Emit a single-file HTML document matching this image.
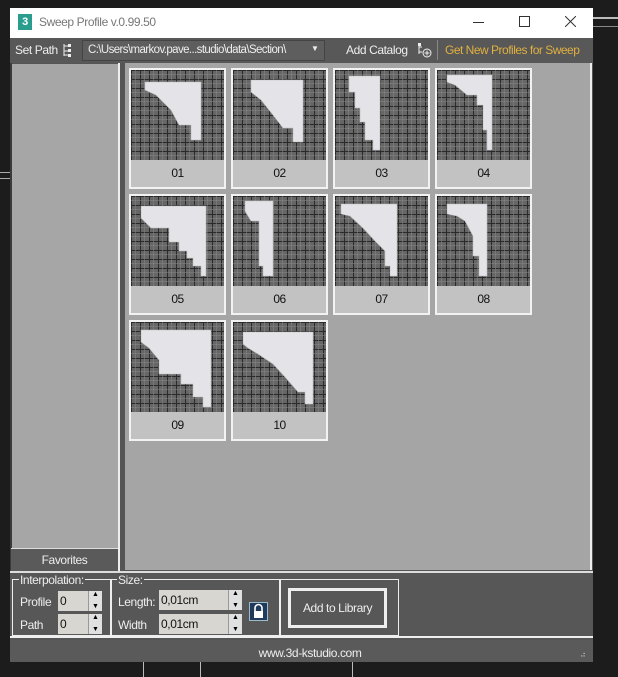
<!DOCTYPE html>
<html><head><meta charset="utf-8"><style>
*{margin:0;padding:0;box-sizing:border-box}
body{width:618px;height:677px;background:#1c1c1c;position:relative;overflow:hidden;font-family:"Liberation Sans",sans-serif;font-size:12px;letter-spacing:-0.4px}
.a{position:absolute;white-space:nowrap}
.thumb{position:absolute;width:97px;height:121px;border:2px solid #f2f2f2;background:#c2c2c2}
.thumb svg{display:block;width:93px;height:90px}
.thumb .l{text-align:center;color:#111;font-size:12px;line-height:27px;letter-spacing:-0.5px}
.inp{position:absolute;background:#d8d6d0;color:#111;height:20px;line-height:20px;padding-left:2px;font-size:12px}
.sp{position:absolute;width:14px;height:20px;background:#e0e0e0;border-left:1px solid #999}
.sp:before{content:"▲";position:absolute;top:0;left:3px;font-size:7px;color:#000}
.sp:after{content:"▼";position:absolute;bottom:1px;left:3px;font-size:7px;color:#000}
.w{color:#eee}
</style></head><body>
<div class="a" style="left:593px;top:17px;width:25px;height:2px;background:#bbb"></div>
<div class="a" style="left:593px;top:26px;width:25px;height:1px;background:#888"></div>
<div class="a" style="left:0;top:172px;width:10px;height:1px;background:#aaa"></div>
<div class="a" style="left:0;top:178px;width:10px;height:1px;background:#aaa"></div>
<div class="a" style="left:143px;top:662px;width:1px;height:15px;background:#bbb"></div>
<div class="a" style="left:200px;top:662px;width:1px;height:15px;background:#bbb"></div>
<div class="a" style="left:352px;top:662px;width:1px;height:15px;background:#bbb"></div>
<div class="a" style="left:10px;top:8px;width:583px;height:654px;background:#555"></div>
<div class="a" style="left:10px;top:8px;width:583px;height:30px;background:#fff"></div>
<div class="a" style="left:18px;top:14px;width:14px;height:16px;background:#2a9d8f;color:#fff;font-size:11px;font-weight:bold;text-align:center;line-height:16px">3</div>
<div class="a" style="left:39px;top:15px;color:#777;font-size:12px">Sweep Profile v.0.99.50</div>
<div class="a" style="left:473px;top:22px;width:11px;height:1px;background:#333"></div>
<div class="a" style="left:519px;top:16px;width:11px;height:11px;border:1px solid #333"></div>
<svg class="a" style="left:565px;top:16px" width="11" height="11"><path d="M0 0L11 11M11 0L0 11" stroke="#333"/></svg>
<div class="a" style="left:10px;top:38px;width:583px;height:25px;background:#585858"></div>
<div class="a w" style="left:15px;top:43px;font-size:12px">Set Path</div>
<svg class="a" style="left:62px;top:43px" width="12" height="14"><path d="M2 1v12M2 3h4M2 8h4M2 12h4" stroke="#eee" fill="none"/><rect x="6" y="1" width="3" height="3" fill="#eee"/><rect x="6" y="6" width="3" height="3" fill="#eee"/><rect x="6" y="11" width="3" height="3" fill="#eee"/></svg>
<div class="a" style="left:82px;top:40px;width:243px;height:21px;background:#5e5e5e;border:1px solid #444"></div>
<div class="a w" style="left:88px;top:44px;font-size:11.5px;letter-spacing:-0.6px">C:\Users\markov.pave...studio\data\Section\</div>
<div class="a w" style="left:311px;top:44px;font-size:8px">▼</div>
<div class="a w" style="left:346px;top:43px;font-size:12px">Add Catalog</div>
<svg class="a" style="left:417px;top:43px" width="16" height="15"><path d="M2 1v10M2 4h3M2 9h3" stroke="#eee" fill="none"/><rect x="1" y="0" width="3" height="3" fill="#eee"/><circle cx="10" cy="10" r="4" stroke="#eee" fill="none"/><path d="M10 7.5v5M7.5 10h5" stroke="#eee"/></svg>
<div class="a" style="left:437px;top:40px;width:1px;height:20px;background:#888"></div>
<div class="a" style="left:445px;top:43px;font-size:12px;letter-spacing:-0.5px;color:#e0b040">Get New Profiles for Sweep</div>
<div class="a" style="left:10px;top:63px;width:2px;height:509px;background:#3a3a3a"></div>
<div class="a" style="left:12px;top:64px;width:106px;height:484px;background:#a6a6a6"></div>
<div class="a" style="left:118px;top:63px;width:2px;height:509px;background:#eee"></div>
<div class="a" style="left:120px;top:63px;width:5px;height:509px;background:#555"></div>
<div class="a" style="left:11px;top:548px;width:107px;height:23px;background:#5a5a5a;border-top:1px solid #ddd"></div>
<div class="a w" style="left:11px;top:553px;width:107px;text-align:center;font-size:12px">Favorites</div>
<div class="a" style="left:125px;top:63px;width:467px;height:507px;background:#a5a5a5;border-right:2px solid #eee"></div>
<div id="g"></div>
<div class="a" style="left:10px;top:571px;width:583px;height:67px;background:#575757;border-top:2px solid #ddd;border-bottom:2px solid #eee"></div>
<div class="a" style="left:12px;top:579px;width:99px;height:57px;border:1px solid #eee"></div>
<div class="a" style="left:111px;top:579px;width:169px;height:57px;border:1px solid #eee"></div>
<div class="a" style="left:280px;top:579px;width:119px;height:57px;border:1px solid #eee"></div>
<div class="a w" style="left:19px;top:573px;background:#575757;padding:0 1px">Interpolation:</div>
<div class="a w" style="left:117px;top:573px;background:#575757;padding:0 1px">Size:</div>
<div class="a w" style="left:20px;top:595px">Profile</div>
<div class="a w" style="left:20px;top:618px">Path</div>
<div class="inp" style="left:58px;top:591px;width:30px">0</div><div class="sp" style="left:88px;top:591px"></div>
<div class="inp" style="left:58px;top:614px;width:30px">0</div><div class="sp" style="left:88px;top:614px"></div>
<div class="a w" style="left:118px;top:595px">Length:</div>
<div class="a w" style="left:118px;top:618px">Width</div>
<div class="inp" style="left:159px;top:590px;width:69px">0,01cm</div><div class="sp" style="left:228px;top:590px"></div>
<div class="inp" style="left:159px;top:614px;width:69px">0,01cm</div><div class="sp" style="left:228px;top:614px"></div>
<div class="a" style="left:249px;top:602px;width:19px;height:19px;background:#1f3a5a;border:1px solid #9bc"></div>
<svg class="a" style="left:252px;top:603px" width="13" height="17"><path d="M3 8V5a3.5 3.5 0 0 1 7 0v3" stroke="#fff" stroke-width="1.6" fill="none"/><rect x="2" y="8" width="9" height="7" fill="#fff"/></svg>
<div class="a" style="left:288px;top:588px;width:99px;height:40px;border:3px solid #eee"></div>
<div class="a w" style="left:288px;top:601px;width:99px;text-align:center">Add to Library</div>
<div class="a" style="left:10px;top:640px;width:583px;height:22px;background:#5a5a5a"></div>
<div class="a w" style="left:10px;top:646px;width:600px;text-align:center;font-size:12px">www.3d-kstudio.com</div>
<div class="a" style="left:580px;top:650px;color:#ccc;font-size:8px">⠴</div>
<script>
var shapes=[
"M14 12H70V70H60V55H48L40 40 25 25 14 20Z",
"M18 10H70V72H60V58H50L40 45 28 30 18 22Z",
"M14 6H45V80H38V70H30V52H25V38H20V22H14Z",
"M10 5H55V80H50V60H46V35H40V25H30L18 15 10 12Z",
"M10 10H75V80H70V70H62V62H56V55H48V46H38V32H20L10 22Z",
"M12 5H40V80H30V70H26V25H18L12 15Z",
"M6 8H62V80H55V70H50V55L40 45 28 32 15 20 6 18Z",
"M10 8H50V80H42V60H36V40L28 25 20 20 10 18Z",
"M10 8H80V85H72V75H62V62H50V52H28V38L18 26 10 20Z",
"M10 10H80V82H72V70H65L52 55 40 42 25 32 15 26 10 22Z"];
var h="";
for(var i=0;i<10;i++){var c=i%4,r=Math.floor(i/4);var x=129+c*102,y=68+r*126;
h+='<div class="thumb" style="left:'+x+'px;top:'+y+'px"><svg viewBox="0 0 93 90"><defs><pattern id="p'+i+'" width="9" height="9" patternUnits="userSpaceOnUse"><rect width="9" height="9" fill="#666"/><path d="M0 .5H9M.5 0V9" stroke="#2a2a2a"/><path d="M0 4.5H9M4.5 0V9" stroke="#888" stroke-width=".5"/></pattern></defs><rect width="93" height="90" fill="url(#p'+i+')"/><path d="'+shapes[i]+'" fill="#e4e4e8" stroke="#bbb" stroke-width=".6"/></svg><div class="l">'+(i<9?"0":"")+(i+1)+'</div></div>';}
document.getElementById("g").innerHTML=h;
</script>
</body></html>
